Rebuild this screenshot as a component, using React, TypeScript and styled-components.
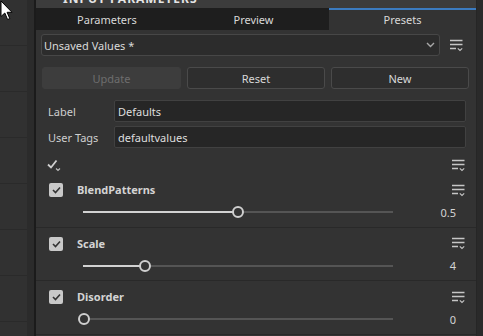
import React from "react";
import styled, { createGlobalStyle } from "styled-components";

const Global = createGlobalStyle`
  html, body { margin: 0; padding: 0; background: #2f2f2f; }
  body { font-family: "Noto Sans", "Open Sans", sans-serif; }
  * { box-sizing: border-box; }
`;

const Frame = styled.div`
  position: relative;
  display: flex;
  width: 483px;
  height: 336px;
  overflow: hidden;
  background: #303030;
`;

const Canvas = styled.div`
  width: 34px;
  flex: none;
  background:
    linear-gradient(90deg, transparent 0 27px, #2b2b2b 27px 34px),
    repeating-linear-gradient(180deg, #313131 0 45px, #2a2a2a 45px 46px);
`;

const Divider = styled.div`
  width: 2px;
  flex: none;
  background: #1b1b1b;
`;

const Panel = styled.div`
  width: 440px;
  flex: none;
  display: flex;
  flex-direction: column;
  background: #333333;
  color: #d6d6d6;
  font-size: 11px;
`;

const Scroll = styled.div`
  flex: 1;
  background: #2a2a2a;
  border-left: 1px solid #262626;
`;

const Header = styled.div`
  height: 8px;
  overflow: hidden;
  background: #3c3c3c;
  padding-left: 27px;
`;

const HeaderTitle = styled.div`
  margin-top: -8px;
  font-weight: 700;
  font-size: 12px;
  letter-spacing: 1px;
  color: #e4e4e4;
  line-height: 14px;
`;

const Tabs = styled.div`
  display: flex;
  height: 22px;
  background: #1e1e1e;
`;

const Tab = styled.div<{ $w: number; $active?: boolean }>`
  width: ${(p) => p.$w}px;
  flex: none;
  display: flex;
  align-items: center;
  justify-content: center;
  font-size: 11px;
  color: #d8d8d8;
  background: ${(p) => (p.$active ? "#333333" : "#1e1e1e")};
  border-top: 2px solid ${(p) => (p.$active ? "#3b7bc0" : "transparent")};
  padding-bottom: 2px;
`;

const Body = styled.div`
  display: flex;
  flex-direction: column;
  padding: 4px 0 0 5px;
`;

const SelectRow = styled.div`
  display: flex;
  align-items: center;
  height: 22px;
`;

const Select = styled.div`
  width: 399px;
  height: 22px;
  display: flex;
  align-items: center;
  justify-content: space-between;
  padding: 0 4px 0 2px;
  background: #2c2c2c;
  border: 1px solid #474747;
  border-radius: 3px;
  font-size: 11px;
  color: #dadada;
`;

const IconSlot = styled.div`
  width: 34px;
  display: flex;
  justify-content: center;
  align-items: center;
`;

const ButtonRow = styled.div`
  display: flex;
  gap: 6px;
  margin: 11px 0 0 1px;
`;

const Button = styled.div<{ $disabled?: boolean }>`
  width: 138px;
  height: 22px;
  display: flex;
  align-items: center;
  justify-content: center;
  font-size: 11px;
  border-radius: 3px;
  color: ${(p) => (p.$disabled ? "#6e6e6e" : "#d8d8d8")};
  background: ${(p) => (p.$disabled ? "#3d3d3d" : "#2e2e2e")};
  border: 1px solid ${(p) => (p.$disabled ? "#3d3d3d" : "#4a4a4a")};
  &:first-child { width: 139px; }
`;

const Field = styled.div<{ $top: number }>`
  display: flex;
  align-items: center;
  margin-top: ${(p) => p.$top}px;
  height: 22px;
`;

const FieldLabel = styled.div`
  width: 73px;
  padding-left: 7px;
  font-size: 11px;
  color: #cfcfcf;
`;

const Input = styled.div`
  width: 352px;
  height: 22px;
  display: flex;
  align-items: center;
  padding-left: 3px;
  background: #262626;
  border: 1px solid #414141;
  border-radius: 2px;
  font-size: 11px;
  color: #dedede;
`;

const ToolRow = styled.div`
  display: flex;
  align-items: center;
  justify-content: space-between;
  height: 18px;
  margin-top: 8px;
  padding-left: 6px;
`;

const Group = styled.div`
  display: grid;
  grid-template-columns: 36px 1fr 34px;
  grid-template-rows: 14px 30px;
  row-gap: 0;
  height: 53.5px;
  padding-top: 9px;
  border-bottom: 1px solid #292929;
  margin-left: -5px;
`;

const Check = styled.div`
  width: 14px;
  height: 14px;
  margin-left: 13px;
  border-radius: 2px;
  background: #c9c9c9;
  display: flex;
  align-items: center;
  justify-content: center;
`;

const GroupLabel = styled.div`
  padding-left: 5px;
  font-weight: 700;
  font-size: 11px;
  color: #d4d4d4;
  line-height: 14px;
`;

const SliderRow = styled.div`
  grid-column: 1 / 4;
  display: flex;
  align-items: center;
  padding-left: 47px;
`;

const Track = styled.div`
  position: relative;
  width: 310px;
  height: 2px;
  background: #555555;
`;

const Fill = styled.div`
  height: 2px;
  background: #d2d2d2;
`;

const Thumb = styled.div`
  position: absolute;
  top: -5px;
  width: 12px;
  height: 12px;
  margin-left: -6px;
  border-radius: 50%;
  border: 2px solid #cfcfcf;
  background: #333333;
`;

const Value = styled.div`
  width: 63px;
  text-align: right;
  font-size: 11px;
  color: #d4d4d4;
`;

const Cursor = styled.svg`
  position: absolute;
  left: 0;
  top: 0;
`;

const MenuIcon = () => (
  <svg width="14" height="13" viewBox="0 0 14 13">
    <g stroke="#c6c6c6" strokeWidth="1.6" fill="none">
      <path d="M0 1.5H12.5M0 5.5H12.5M0 9.5H6" />
      <path d="M7.8 9.3L10 11.5L12.2 9.3" strokeWidth="1.1" />
    </g>
  </svg>
);

const CheckMark = () => (
  <svg width="9" height="8" viewBox="0 0 9 8">
    <path d="M1 4L3.5 6.5L8 1.5" stroke="#333" strokeWidth="1.6" fill="none" />
  </svg>
);

const CheckAllIcon = () => (
  <svg width="14" height="13" viewBox="0 0 14 13">
    <path d="M1 5.5L4 8.5L9.5 1.5" stroke="#d0d0d0" strokeWidth="1.8" fill="none" />
    <path d="M9 9.5L11 11.5L13 9.5" stroke="#bdbdbd" strokeWidth="1.1" fill="none" />
  </svg>
);

const Chevron = () => (
  <svg width="9" height="6" viewBox="0 0 9 6">
    <path d="M1 1L4.5 4.5L8 1" stroke="#a8a8a8" strokeWidth="1.4" fill="none" />
  </svg>
);

type P = { name: string; value: string; frac: number };
const params: P[] = [
  { name: "BlendPatterns", value: "0.5", frac: 0.5 },
  { name: "Scale", value: "4", frac: 0.2 },
  { name: "Disorder", value: "0", frac: 0.003 },
];

export default function App() {
  return (
    <>
      <Global />
      <Frame>
        <Canvas />
        <Divider />
        <Panel>
          <Header>
            <HeaderTitle>INPUT PARAMETERS</HeaderTitle>
          </Header>
          <Tabs>
            <Tab $w={142}>Parameters</Tab>
            <Tab $w={151}>Preview</Tab>
            <Tab $w={147} $active>
              Presets
            </Tab>
          </Tabs>
          <Body>
            <SelectRow>
              <Select>
                <span>Unsaved Values *</span>
                <Chevron />
              </Select>
              <IconSlot>
                <MenuIcon />
              </IconSlot>
            </SelectRow>
            <ButtonRow>
              <Button $disabled>Update</Button>
              <Button>Reset</Button>
              <Button>New</Button>
            </ButtonRow>
            <Field $top={11}>
              <FieldLabel>Label</FieldLabel>
              <Input>Defaults</Input>
            </Field>
            <Field $top={4}>
              <FieldLabel>User Tags</FieldLabel>
              <Input>defaultvalues</Input>
            </Field>
            <ToolRow>
              <CheckAllIcon />
              <IconSlot>
                <MenuIcon />
              </IconSlot>
            </ToolRow>
            {params.map((p) => (
              <Group key={p.name}>
                <Check>
                  <CheckMark />
                </Check>
                <GroupLabel>{p.name}</GroupLabel>
                <IconSlot>
                  <MenuIcon />
                </IconSlot>
                <SliderRow>
                  <Track>
                    <Fill style={{ width: `${p.frac * 100}%` }} />
                    <Thumb style={{ left: `${p.frac * 100}%` }} />
                  </Track>
                  <Value>{p.value}</Value>
                </SliderRow>
              </Group>
            ))}
          </Body>
        </Panel>
        <Scroll />
        <Cursor width="14" height="21" viewBox="0 0 14 21">
          <path
            d="M1 1L1 16.5L4.8 13L7.6 19.5L9.8 18.6L7.1 12.3L12 12.3Z"
            fill="#fff"
            stroke="#000"
            strokeWidth="1"
          />
        </Cursor>
      </Frame>
    </>
  );
}
